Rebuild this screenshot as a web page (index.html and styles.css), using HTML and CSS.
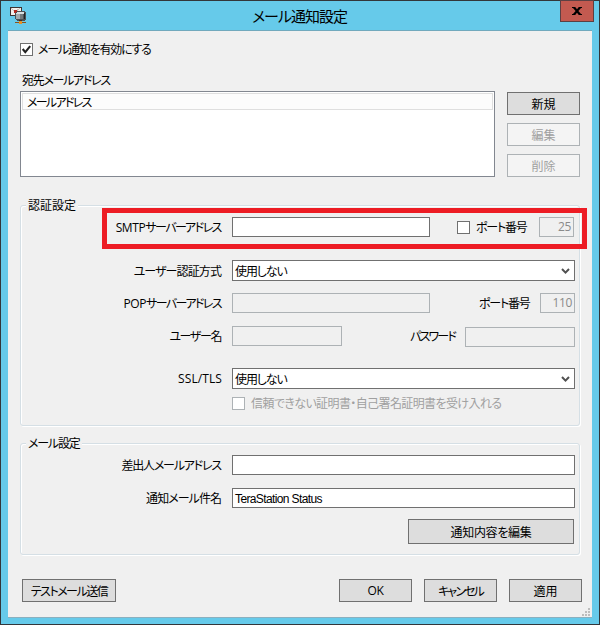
FILE: index.html
```html
<!DOCTYPE html>
<html lang="ja">
<head>
<meta charset="utf-8">
<title>メール通知設定</title>
<link rel="stylesheet" href="styles.css">
</head>
<body>
<div class="window">
  <header class="titlebar">
    <svg class="app-icon" width="18" height="18" viewBox="0 0 18 18" shape-rendering="crispEdges">
      <rect x="0.5" y="0.5" width="11" height="8" fill="#f5f0ec" stroke="#3d3432"/>
      <path d="M1 1l4 4 5-4" fill="none" stroke="#c9c0ba"/>
      <rect x="4" y="3" width="3" height="3" fill="#b52b20"/>
      <path d="M5 6l2-2h7l2 1v7l-2 2H7l-2-2z" fill="#4c5255"/>
      <path d="M6 6l2-1h6v2H6z" fill="#d9dfe0"/>
      <rect x="6" y="7" width="4" height="5" fill="#a3abad"/>
      <rect x="10" y="7" width="3" height="5" fill="#737a7c"/>
      <rect x="14" y="6" width="1" height="6" fill="#202426"/>
      <rect x="9" y="13" width="3" height="2" fill="#333"/>
      <rect x="5" y="15" width="11" height="1" fill="#8b541b"/>
      <rect x="9" y="14" width="3" height="3" fill="#e89225"/>
    </svg>
    <h1 class="title">メール通知設定</h1>
    <button class="close" aria-label="閉じる">
      <svg width="10" height="8" viewBox="0 0 10 8"><path d="M0 0H3.2L5 2.2 6.8 0H10V1H9L6.4 4 9 7H10V8H6.8L5 5.8 3.2 8H0V7H1L3.6 4 1 1H0z" fill="#000"/></svg>
    </button>
  </header>
  <main class="client">
    <div class="enable">
      <span class="check"><svg width="11" height="11" viewBox="0 0 11 11"><path d="M1.7 5l2.6 3.2L9.2 2.2" fill="none" stroke="#222" stroke-width="2.1"/></svg></span>
      <span class="t-enable">メール通知を有効にする</span>
    </div>
    <div class="list-label t-dest">宛先メールアドレス</div>
    <div class="list-row">
      <div class="list"><div class="list-head t-head">メールアドレス</div></div>
      <div class="list-buttons">
        <button class="btn">新規</button>
        <button class="btn off">編集</button>
        <button class="btn off">削除</button>
      </div>
    </div>

    <section class="group auth">
      <h2 class="legend">認証設定</h2>
      <div class="row r-smtp">
        <span class="label t-smtp"><span class="latin tight">SMTP</span>サーバーアドレス</span>
        <span class="field server"></span>
        <span class="check port-check"></span>
        <span class="port-a t-port">ポート番号</span>
        <span class="field off num">25</span>
        <div class="highlight"></div>
      </div>
      <div class="row r-method">
        <span class="label t-method">ユーザー認証方式</span>
        <span class="field select"><span class="t-none">使用しない</span><svg class="arrow" width="9" height="7" viewBox="0 0 9 7"><path d="M1 1l3.5 3.6L8 1" fill="none" stroke="#505050" stroke-width="2"/></svg></span>
      </div>
      <div class="row r-pop">
        <span class="label t-pop"><span class="latin tight">POP</span>サーバーアドレス</span>
        <span class="field off server"></span>
        <span class="port-b t-port">ポート番号</span>
        <span class="field off num">110</span>
      </div>
      <div class="row r-user">
        <span class="label t-user">ユーザー名</span>
        <span class="field off user"></span>
        <span class="pass-label t-pass">パスワード</span>
        <span class="field off pass"></span>
      </div>
      <div class="row r-ssl">
        <span class="label ssl"><span class="latin">SSL/TLS</span></span>
        <span class="field select"><span class="t-none">使用しない</span><svg class="arrow" width="9" height="7" viewBox="0 0 9 7"><path d="M1 1l3.5 3.6L8 1" fill="none" stroke="#505050" stroke-width="2"/></svg></span>
      </div>
      <div class="row r-cert">
        <span class="check off"></span>
        <span class="cert t-cert">信頼できない証明書・自己署名証明書を受け入れる</span>
      </div>
    </section>

    <section class="group mail">
      <h2 class="legend t-mail">メール設定</h2>
      <div class="row r-from">
        <span class="label t-from">差出人メールアドレス</span>
        <span class="field wide"></span>
      </div>
      <div class="row r-subject">
        <span class="label t-subject">通知メール件名</span>
        <span class="field wide"><span class="value">TeraStation Status</span></span>
      </div>
      <button class="btn edit t-edit">通知内容を編集</button>
    </section>

    <footer class="actions">
      <button class="btn test t-test">テストメール送信</button>
      <button class="btn"><span class="latin tight">OK</span></button>
      <button class="btn t-cancel">キャンセル</button>
      <button class="btn">適用</button>
    </footer>
    <svg class="grip" width="8" height="8" viewBox="0 0 8 8" fill="#bdbdbd"><path d="M6 0h2v2H6zM3 3h2v2H3zM6 3h2v2H6zM0 6h2v2H0zM3 6h2v2H3zM6 6h2v2H6z"/></svg>
  </main>
</div>
</body>
</html>
```
FILE: styles.css
```css
* { box-sizing: border-box; }
body {
  margin: 0;
  font: 12px/20px "Noto Sans CJK JP", sans-serif;
  font-feature-settings: "palt";
  color: #000;
  white-space: nowrap;
}
.window {
  width: 600px;
  height: 625px;
  padding: 0 7px 7px;
  border: 1px solid #33363a;
  background: #66caea;
}
.titlebar {
  display: flex;
  align-items: flex-start;
  justify-content: space-between;
  height: 30px;
  border-bottom: 1px solid #71a9bd;
}
.app-icon { margin: 6px 0 0 2px; }
.title { margin: 5px 0 0 11px; font-size: 15px; font-weight: 400; line-height: 20px; letter-spacing: -1px; }
.close {
  width: 34px;
  height: 22px;
  margin: -1px -2px 0 0;
  padding: 0;
  display: flex;
  align-items: center;
  justify-content: center;
  border: 1px solid #5c4043;
  background: #c35a50;
}
.client {
  position: relative;
  height: 587px;
  padding: 0 12px;
  background: #f0f0f0;
  border-bottom: 1px solid #8bb0bf;
}
.enable { display: flex; align-items: center; gap: 5px; padding-top: 8px; }
.check {
  flex: none;
  width: 13px;
  height: 13px;
  display: block;
  border: 1px solid #707070;
  background: #fff;
  line-height: 0;
}
.check.off { border-color: #adb2b5; }
.list-label { margin: 11px 0 0 2px; }
.list-row { display: flex; justify-content: space-between; align-items: flex-start; margin-top: 1px; }
.list { width: 475px; height: 86px; padding: 1px; border: 1px solid #828790; background: #fff; }
.list-head { height: 17px; padding-left: 4px; border: 1px solid #dfdfdf; background: #fcfcfc; line-height: 15px; }
.list-buttons { width: 73px; display: flex; flex-direction: column; gap: 8px; margin-top: 1px; }
.btn {
  width: 73px;
  height: 23px;
  padding: 0;
  border: 1px solid #707070;
  background: #ddd;
  color: #000;
  font: inherit;
  font-feature-settings: inherit;
  line-height: 20px;
}
.btn.off { border-color: #adb2b5; background: #f4f4f4; color: #a0a0a0; }
.group {
  position: relative;
  border: 1px solid #d5dfe5;
  border-radius: 3px;
  box-shadow: 1px 1px #fff, inset 1px 1px #fff;
}
.auth { height: 221px; margin-top: 28px; padding-top: 11px; }
.mail { height: 112px; margin-top: 17px; padding-top: 11px; }
.legend {
  position: absolute;
  top: -11px;
  left: 5px;
  margin: 0;
  padding: 0 2px;
  background: #f0f0f0;
  font-size: 12px;
  font-weight: 400;
  line-height: 20px;
}
.row { position: relative; display: flex; height: 20px; align-items: center; }
.label { width: 201px; margin-right: 10px; padding-right: 1px; text-align: right; }
.label.ssl { padding-right: 0; }
.latin { font-family: "Open Sans", sans-serif; letter-spacing: 0.1px; }
.latin.tight { letter-spacing: -0.4px; }
.field { height: 20px; border: 1px solid #707070; background: #fff; line-height: 18px; }
.field.off { border-color: #adb2b5; background: #f0f0f0; color: #8a8a8a; }
.server { width: 198px; }
.wide, .select { width: 343px; }
.select { height: 21px; display: flex; justify-content: space-between; align-items: center; padding: 0 4px 0 2px; }
.arrow { margin-top: 2px; }
.num { width: 35px; padding-right: 2px; text-align: right; font-family: "Open Sans", sans-serif; letter-spacing: -0.4px; }
.port-check { margin: 0 6px 0 27px; }
.port-a { width: 63px; }
.port-b { width: 61px; margin-left: 49px; }
.r-method { height: 21px; margin-top: 23px; }
.r-pop { margin-top: 12px; }
.r-user { margin-top: 13px; }
.user { width: 110px; }
.pass-label { width: 55px; margin-left: 68px; }
.pass { width: 110px; position: relative; top: 1px; }
.r-ssl { height: 21px; margin-top: 22px; }
.r-cert { margin-top: 4px; padding-left: 211px; }
.cert { margin-left: 6px; color: #a0a0a0; }
.highlight {
  position: absolute;
  top: -9px;
  left: 81px;
  width: 485px;
  height: 41px;
  border: 5px solid #ed1c24;
}
.r-subject { margin-top: 13px; }
.value { padding-left: 2px; font-family: "Liberation Sans", sans-serif; letter-spacing: -0.62px; }
.edit { display: block; width: 166px; height: 25px; margin: 11px 0 0 387px; }
.actions { display: flex; gap: 12px; margin: 24px -2px 0 2px; }
.test { width: 94px; margin-right: 211px; }
.grip { position: absolute; right: 2px; bottom: 1px; }

/* Tight kana setting, tuned for each caption */
.t-enable { letter-spacing: -1.2px; }
.t-dest { letter-spacing: -1.3px; }
.t-head { letter-spacing: -1.7px; }
.t-smtp { letter-spacing: -1.5px; }
.t-method { letter-spacing: -0.9px; }
.t-pop { letter-spacing: -1.6px; }
.t-user { letter-spacing: -1.4px; }
.t-none { letter-spacing: -1.1px; }
.t-port { letter-spacing: -1.2px; }
.t-pass { letter-spacing: -1.8px; }
.t-cert { letter-spacing: -0.6px; }
.t-mail { letter-spacing: -1.2px; }
.t-from { letter-spacing: -1.2px; }
.t-subject { letter-spacing: -0.95px; }
.t-edit { letter-spacing: -0.3px; }
.t-test { letter-spacing: -1.5px; }
.t-cancel { letter-spacing: -1.9px; }
```
